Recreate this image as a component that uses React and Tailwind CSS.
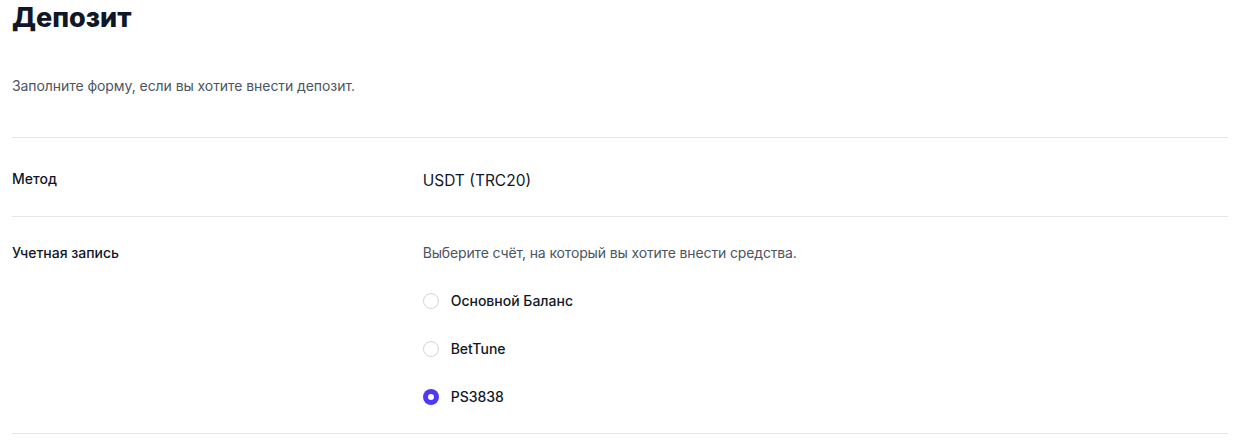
import { useState } from 'react';

const accounts = ['Основной Баланс', 'BetTune', 'PS3838'];

export default function App() {
  const [account, setAccount] = useState('PS3838');

  return (
    <div className="bg-white min-h-screen pl-3 pr-[9px] font-['Inter','Liberation_Sans',sans-serif] antialiased">
      <h2 className="pt-[2px] text-[27px] leading-8 font-extrabold text-gray-900">Депозит</h2>
      <p className="mt-[40px] text-sm leading-6 text-gray-600 tracking-[-0.005em]">
        Заполните форму, если вы хотите внести депозит.
      </p>

      <div className="mt-[39px] border-t border-gray-200 divide-y divide-gray-200 border-b">
        {/* Method row */}
        <div className="grid grid-cols-3 gap-4 items-start pt-[31px] pb-[23px]">
          <div className="text-sm leading-5 font-medium text-gray-900">Метод</div>
          <div className="col-span-2 text-[15.5px] leading-6 text-gray-900">USDT (TRC20)</div>
        </div>

        {/* Account row */}
        <div className="grid grid-cols-3 gap-4 items-start py-6">
          <div className="text-sm leading-6 font-medium text-gray-900">Учетная запись</div>
          <div className="col-span-2">
            <p className="text-sm leading-6 text-gray-600 tracking-[-0.01em]">
              Выберите счёт, на который вы хотите внести средства.
            </p>
            <div className="mt-6 space-y-6">
              {accounts.map((name) => (
                <label key={name} className="flex items-center gap-x-3 cursor-pointer">
                  <input
                    type="radio"
                    name="account"
                    checked={account === name}
                    onChange={() => setAccount(name)}
                    className="sr-only"
                  />
                  <span
                    className={
                      account === name
                        ? 'h-4 w-4 rounded-full bg-indigo-600 flex items-center justify-center'
                        : 'h-4 w-4 rounded-full border border-gray-300 bg-white'
                    }
                  >
                    {account === name && <span className="h-1.5 w-1.5 rounded-full bg-white" />}
                  </span>
                  <span className="text-sm leading-6 font-medium text-gray-900">{name}</span>
                </label>
              ))}
            </div>
          </div>
        </div>
      </div>
    </div>
  );
}
